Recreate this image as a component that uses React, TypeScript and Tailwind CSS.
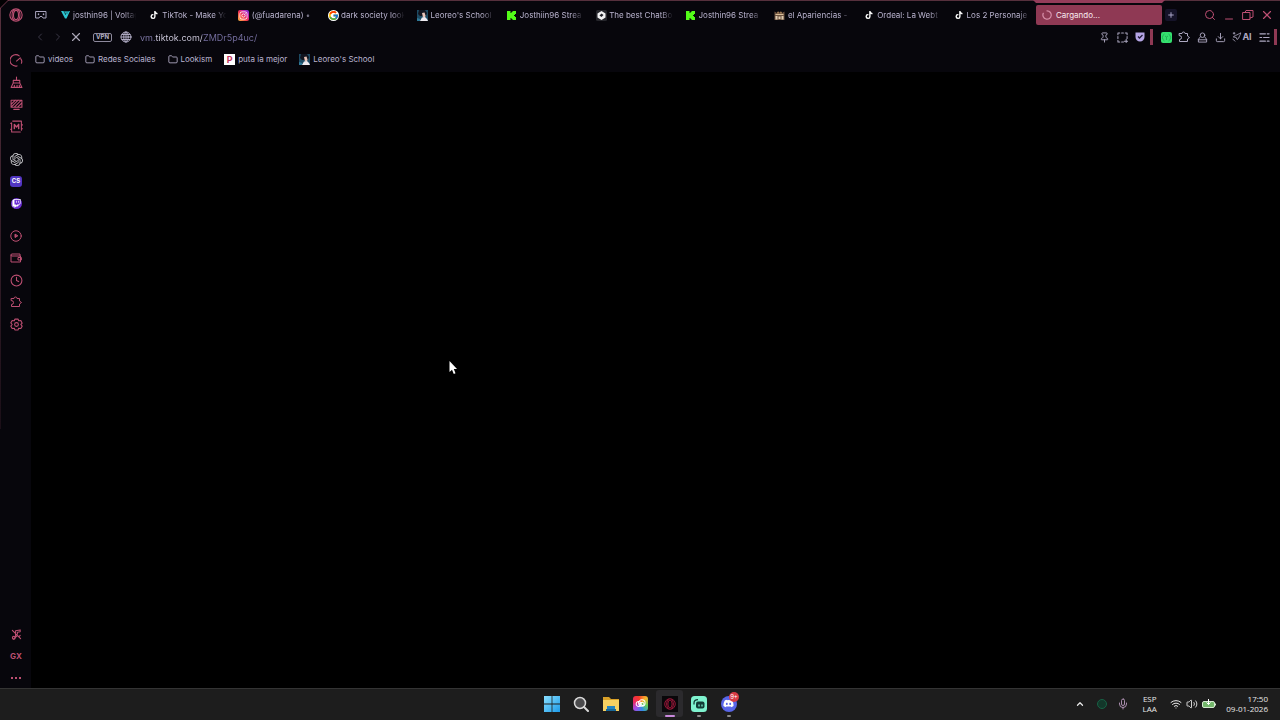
import type { ReactNode } from "react";
import {
  Search, Minus, X, Plus, ChevronLeft, ChevronRight, Folder, Download, Pin,
  Clock, ChevronUp, Mic, Wifi, Volume2,
} from "lucide-react";
import { FaTiktok, FaTwitch, FaDiscord, FaInstagram } from "react-icons/fa";
import { FcGoogle } from "react-icons/fc";
import { SiOpenai } from "react-icons/si";

function OperaIcon({ className }: { className: string }) {
  return (
    <svg viewBox="0 0 28 28" className={className} fill="none" stroke="currentColor" strokeWidth="2.2">
      <circle cx="14" cy="14" r="12.3" />
      <ellipse cx="14" cy="14" rx="5" ry="9.3" />
      <path d="M11 3.500C4.500 6 4.500 22 11 24.500M17 3.500c6.500 2.500 6.500 18.500 0 21" />
    </svg>
  );
}

function Line({ className = "size-3", width = 2, children }: { className?: string; width?: number; children: ReactNode }) {
  return (
    <svg viewBox="0 0 24 24" className={className} fill="none" stroke="currentColor" strokeWidth={width} strokeLinejoin="round" strokeLinecap="round">
      {children}
    </svg>
  );
}

function PuzzleIcon({ className }: { className: string }) {
  return (
    <Line className={className}>
      <path d="M3 5h5a3 3 0 0 1 6 0h5v5l4 3-4 3v5H3v-4a4 4 0 0 0 0-8z" />
    </Line>
  );
}

function Kick() {
  return (
    <svg viewBox="0 0 9 9" className="h-[9px] w-[9px]" fill="#53fc18">
      <path d="M0 0h3.500v2h1V1h1V0H9v3H8v1H7v1h1v1h1v3H5.500V8h-1V7h-1v2H0z" />
    </svg>
  );
}

function Volta() {
  return (
    <svg viewBox="0 0 18 16" className="h-2 w-[9px]" fill="#2cc4d0">
      <path d="M0 0h5l4 8 1.500-3H8L6.500 0H18l-7 15H8z" />
      <path d="M7 1h9M8.500 4H14" stroke="#07303a" strokeWidth="1" />
    </svg>
  );
}

function Portrait() {
  return (
    <svg viewBox="0 0 11 11" className="size-[11px]">
      <rect width="11" height="11" fill="#1d4a63" />
      <path d="M2 0h6l2 3-1 3H3L1 4z" fill="#11141f" />
      <path d="M5 3l2.500-.5 1 3L8 7.500H6z" fill="#e8c3b8" />
      <path d="M3 11l2-3.500 3-.5 2 2 1 2z" fill="#eeeaf0" />
      <path d="M0 8l3 1v2H0z" fill="#2f7897" />
    </svg>
  );
}

function Insta() {
  return (
    <span className="flex size-[11px] items-center justify-center rounded-[2px] bg-[linear-gradient(45deg,#fdc044,#f5334f_45%,#c324b8_75%,#6a3be0)] text-white">
      <FaInstagram className="size-[9px]" />
    </span>
  );
}

function ChatBot() {
  return (
    <svg viewBox="0 0 22 22" className="size-[11px]">
      <rect width="22" height="22" rx="3" fill="#26262c" />
      <path d="M11 2l8 5v8l-8 5-8-5V7z" fill="#f2f2f4" />
      <path d="M11 7l4 3-4 4-4-3z" fill="#222228" />
    </svg>
  );
}

function Chest() {
  return (
    <svg viewBox="0 0 22 22" className="size-[11px]">
      <path d="M1 3l5 3 2-4 3 3 3-3 2 4 5-3v17H1z" fill="#6d5340" />
      <path d="M3 8h16v2H3z" fill="#d8bd9a" />
      <path d="M3 12h4v7H3zM15 12h4v7h-4zM9 13h4v5H9z" fill="#e0cbb0" />
      <path d="M7 4h2v3H7zM13 4h2v3h-2z" fill="#c89a66" />
    </svg>
  );
}

const tik = <FaTiktok className="size-2 text-white" />;

const tabs: { title: string; icon: ReactNode }[] = [
  { title: "josthin96 | Voltag", icon: <Volta /> },
  { title: "TikTok - Make Yo", icon: tik },
  { title: "(@fuadarena) •", icon: <Insta /> },
  { title: "dark society look", icon: <FcGoogle className="size-[11px] rounded-full bg-white" /> },
  { title: "Leoreo's School", icon: <Portrait /> },
  { title: "Josthiin96 Strea", icon: <Kick /> },
  { title: "The best ChatBo", icon: <ChatBot /> },
  { title: "Josthin96 Strea", icon: <Kick /> },
  { title: "el Apariencias -", icon: <Chest /> },
  { title: "Ordeal: La Webt", icon: tik },
  { title: "Los 2 Personaje", icon: tik },
];

const folder = <Folder className="h-[11px] w-[10px]" strokeWidth={2} />;

const bookmarks: { title: string; icon: ReactNode }[] = [
  { title: "videos", icon: folder },
  { title: "Redes Sociales", icon: folder },
  { title: "Lookism", icon: folder },
  {
    title: "puta ia mejor",
    icon: (
      <span className="flex size-[11px] items-center justify-center bg-white text-[9px] leading-none font-bold text-[#c33460]">P</span>
    ),
  },
  { title: "Leoreo's School", icon: <Portrait /> },
];

const sideGroups: { label: string; icon: ReactNode }[][] = [
  [
    { label: "Speed Dial", icon: <Line className="size-[13px]"><path d="M13 22A10.500 10.500 0 1 1 17 3.500M12 13l7-6M20 9q3 4 1 8" /></Line> },
    { label: "GX Cleaner", icon: <Line className="size-[13px]"><path d="M12 2v6M6 8h12v5H6zM6 13l-4 8h20l-4-8M8 21v-4M13 21v-4M18 21l-1-4" /></Line> },
    { label: "Mods", icon: <Line className="size-[13px]"><path d="M2 4h20v13H2zM7 21h10M3 11l7-7M3 16L15 4M8 17L20 5M14 17l8-8" /></Line> },
    { label: "GX Control", icon: <Line className="size-[13px]"><path d="M5 2h16v17M19 22H3V5M1 6h2M1 17h2M21 9h2M21 16h2" /><path d="M8 16V8l4 5 4-5v8" strokeWidth="2.600" /></Line> },
  ],
  [
    { label: "ChatGPT", icon: <SiOpenai className="size-[13px] text-[#c8c8cc]" /> },
    { label: "CS", icon: <span className="flex h-[11px] w-3 items-center justify-center rounded-[3px] bg-[#5136c2] text-[6px] leading-none font-bold text-white">CS</span> },
    { label: "Twitch", icon: <span className="flex size-[11px] items-center justify-center rounded-full bg-[#6d31d6] text-white"><FaTwitch className="size-[9px]" /></span> },
  ],
  [
    { label: "Player", icon: <Line><circle cx="12" cy="12" r="10.500" /><path d="M10 9v6l5-3z" fill="currentColor" /></Line> },
    { label: "Wallet", icon: <Line><path d="M20 8V4H4a2 2 0 0 0 0 4h17v12H2V6M22 11h-6v5h6z" /></Line> },
    { label: "History", icon: <Clock className="size-[13px]" strokeWidth={2} /> },
    { label: "Extensions", icon: <PuzzleIcon className="size-3" /> },
    { label: "Settings", icon: <Line className="size-[13px]"><path d="M9 2h6l1 3 4-.5 2.500 5L20 12l2.500 3-2.500 4.500-4-.5-1 3H9l-1-3-4 .5L1.500 15 4 12 1.500 9 4 4.500 8 5z" /><circle cx="12" cy="12" r="3.500" /></Line> },
  ],
];

function SideButton({ label, children }: { label: string; children: ReactNode }) {
  return (
    <button aria-label={label} className="flex h-[22px] w-full items-center justify-center">{children}</button>
  );
}

function ToolButton({ label, children }: { label: string; children: ReactNode }) {
  return (
    <button aria-label={label} className="flex h-4 w-[18px] items-center justify-center">{children}</button>
  );
}

function WindowButton({ label, children }: { label: string; children: ReactNode }) {
  return (
    <button aria-label={label} className="flex h-5 w-[19px] items-center justify-center text-[#bd4f72]">{children}</button>
  );
}

function TabBar() {
  return (
    <div className="flex h-[26px] items-center border-t border-[#56303d] pt-[3px] pr-1 pl-[6px]">
      <button aria-label="Menu" className="flex w-[20px] justify-center text-[#bd4f72]"><OperaIcon className="size-[14px]" /></button>
      <button aria-label="Workspace" className="ml-2 flex w-[13px] justify-center text-[#a9a4bd]">
        <Line className="size-3"><path d="M2 5h20v13h-6l-2-3h-4l-2 3H2z" /><path d="M7 10v1M17 10v1" strokeWidth="3" /></Line>
      </button>
      <div role="tablist" className="ml-[6px] flex min-w-0 flex-1">
        {tabs.map((tab, i) => (
          <button key={i} role="tab" className="flex h-5 min-w-0 flex-1 items-center gap-[2px] pl-[6px] text-[#bab4cf]">
            <span className="flex w-3 shrink-0 justify-center">{tab.icon}</span>
            <span className="min-w-0 flex-1 text-left text-[8px] whitespace-nowrap [mask-image:linear-gradient(to_right,#000_74%,transparent_92%)]">{tab.title}</span>
          </button>
        ))}
      </div>
      <div className="relative w-[126px]">
        <svg viewBox="0 0 132 3" className="absolute -top-[5px] -left-[3px] h-[3px] w-[132px]"><path d="M0 0h132l-3 3H3z" fill="#943c5a" /></svg>
        <button role="tab" aria-selected="true" className="flex h-5 w-full items-center gap-1 rounded-[2px] bg-[#8f3954] pl-[6px] text-[8px] text-[#f8e8ee]">
          <Line className="size-[10px] text-[#d68ea8]" width={3}><path d="M12 2a10 10 0 1 1-9 6" /></Line>
          Cargando...
        </button>
      </div>
      <button aria-label="New tab" className="ml-[3px] flex size-3 items-center justify-center rounded-[2px] bg-[#151329] text-[#aaa5c9]"><Plus className="size-2" strokeWidth={3} /></button>
      <div className="ml-[23px] flex">
        <WindowButton label="Search tabs"><Search className="size-3" strokeWidth={2} /></WindowButton>
        <WindowButton label="Minimize"><Minus className="mt-2 size-3" strokeWidth={2} /></WindowButton>
        <WindowButton label="Restore"><Line className="size-3"><path d="M2 7h14v14H2zM6 7l2-4h14v13l-6 2" /></Line></WindowButton>
        <WindowButton label="Close"><X className="size-[14px]" strokeWidth={2} /></WindowButton>
      </div>
    </div>
  );
}

function AddressBar() {
  return (
    <div className="flex h-[22px] items-center pr-[3px] pl-[31px] text-[#aea9c2]">
      <ToolButton label="Back"><ChevronLeft className="size-3 text-[#3b3847]" strokeWidth={2} /></ToolButton>
      <ToolButton label="Forward"><ChevronRight className="size-3 text-[#3b3847]" strokeWidth={2} /></ToolButton>
      <ToolButton label="Stop"><X className="size-[14px] text-[#aaa6b6]" strokeWidth={2} /></ToolButton>
      <button className="ml-2 flex h-[9px] w-[19px] items-center justify-center rounded-[2px] border border-[#8d899c] text-[6px] leading-none font-bold text-[#b6b2c4]">VPN</button>
      <button aria-label="Site information" className="ml-2 flex">
        <Line className="size-3"><circle cx="12" cy="12" r="10" /><ellipse cx="12" cy="12" rx="4.500" ry="10" /><path d="M12 2v20M2 12h20M4 7h16M4 17h16" /></Line>
      </button>
      <input
        aria-label="Address"
        defaultValue="vm.tiktok.com/ZMDr5p4uc/"
        className="ml-2 h-4 min-w-0 flex-1 bg-[linear-gradient(90deg,#7f78a8_15px,#d3cfe2_15px_62px,#7770a2_62px)] bg-clip-text text-[9px] text-transparent outline-none"
      />
      <ToolButton label="Pin"><Pin className="size-[11px]" strokeWidth={2} /></ToolButton>
      <ToolButton label="Snapshot"><Line className="size-[11px]" width={2.2}><path d="M2 6V2h4M10 2h4M18 2h4v4M22 10v4M2 10v4M2 18v4h4M10 22h4M16 20h7M20 16v7" /></Line></ToolButton>
      <ToolButton label="Privacy protection">
        <svg viewBox="0 0 20 20" className="size-[10px]"><path d="M1 1h18v9c0 5-4 9-9 9s-9-4-9-9z" fill="#b5a5e5" /><path d="M6 9l3 3 6-6" fill="none" stroke="#211a38" strokeWidth="2.500" /></svg>
      </ToolButton>
      <span className="ml-px h-4 w-[3px] bg-[#8f3954]" />
      <span className="ml-1 flex">
        <ToolButton label="Volt extension">
          <svg viewBox="0 0 22 22" className="size-[11px]"><rect width="22" height="22" rx="4" fill="#35e06f" /><path d="M7 4a8 8 0 0 0 0 14M15 4a8 8 0 0 1 0 14M8 8l3 2 3-2M11 10v6" fill="none" stroke="#1fae50" strokeWidth="1.800" /></svg>
        </ToolButton>
      </span>
      <ToolButton label="Extensions"><PuzzleIcon className="size-3" /></ToolButton>
      <ToolButton label="Profile"><Line className="size-[11px]" width={2}><circle cx="12" cy="7" r="5" /><path d="M7 11l-4 5v6h18v-6l-4-5M3 17h18" /></Line></ToolButton>
      <ToolButton label="Downloads"><Download className="size-[11px]" strokeWidth={2} /></ToolButton>
      <button className="flex h-4 w-[26px] items-center justify-center text-[9px] font-bold">
        <Line className="size-[10px]" width={2}><path d="M9 8c5-1 7-4 12-6-1 6-4 8-5 13l-4 3-2-5-6-1zM2 17l5 5M5 5V1M3 3h4" /></Line>AI
      </button>
      <ToolButton label="Easy setup"><Line className="size-[11px]" width={2.4}><path d="M2 4h12M18 4h4M2 12h4M10 12h12M2 20h12M18 20h4" /></Line></ToolButton>
      <span className="ml-px h-4 w-[3px] bg-[#8f3954]" />
    </div>
  );
}

function Sidebar() {
  return (
    <aside className="flex w-[31px] shrink-0 flex-col pt-px pr-px pl-[2px] text-[#bd4f72]">
      <div className="flex flex-col gap-[11px]">
        {sideGroups.map((group, i) => (
          <div key={i}>
            {group.map((item) => <SideButton key={item.label} label={item.label}>{item.icon}</SideButton>)}
          </div>
        ))}
      </div>
      <div className="mt-auto">
        <SideButton label="Mute sounds"><Line className="size-[11px]" width={2.4}><path d="M10 18V4l10-2v4l-6 1M14 8v3M3 3l18 18M14 14l-8 8M20 14l-3 3" /><circle cx="6" cy="19" r="3" /></Line></SideButton>
        <button className="flex h-[22px] w-full items-center justify-center text-[8px] font-bold">GX</button>
        <button aria-label="More" className="flex h-[21px] w-full items-center justify-center gap-[2px]">
          <span className="size-[2px] bg-current" /><span className="size-[2px] bg-current" /><span className="size-[2px] bg-current" />
        </button>
      </div>
    </aside>
  );
}

function TaskButton({ label, active, running, children }: { label: string; active?: boolean; running?: boolean; children: ReactNode }) {
  return (
    <button aria-label={label} className={active ? "relative flex h-[27px] w-[27px] items-center justify-center rounded-[3px] bg-[#2b2a2d]" : "relative flex h-[27px] w-[27px] items-center justify-center"}>
      {children}
      {active && <span className="absolute bottom-0 h-[2px] w-[10px] rounded-full bg-[#c888dc]" />}
      {running && <span className="absolute bottom-0 h-[2px] w-1 rounded-full bg-[#8c8c8c]" />}
    </button>
  );
}

function Taskbar() {
  return (
    <footer className="grid h-8 shrink-0 grid-cols-[1fr_auto_1fr] items-center border-t border-[#343434] bg-[#1d1d1d] pb-[2px] text-[#e8e8e8]">
      <div />
      <div className="flex w-[204px] justify-between">
        <TaskButton label="Start">
          <svg viewBox="0 0 16 16" className="size-4"><defs><linearGradient id="win" x2="1" y2="1"><stop stopColor="#8ae0ff" /><stop offset="1" stopColor="#1c9bea" /></linearGradient></defs><path d="M0 0h7.600v7.600H0zM8.400 0H16v7.600H8.400zM0 8.400h7.600V16H0zM8.400 8.400H16V16H8.400z" fill="url(#win)" /></svg>
        </TaskButton>
        <TaskButton label="Search">
          <svg viewBox="0 0 16 16" className="size-4"><circle cx="7" cy="7" r="5.500" fill="#4b4b4d" stroke="#d9d9d9" strokeWidth="1.500" /><path d="M11 11l4 4" stroke="#d9d9d9" strokeWidth="2" strokeLinecap="round" /></svg>
        </TaskButton>
        <TaskButton label="File Explorer">
          <svg viewBox="0 0 18 16" className="h-4 w-[18px]"><path d="M1 1h6l2 2h8v4H1z" fill="#d9a128" /><path d="M1 4h16v11H1z" fill="#f7d162" /><path d="M5 10h8v5H5z" fill="#2383c1" /><path d="M4 13h10v2H4z" fill="#176798" /></svg>
        </TaskButton>
        <TaskButton label="Creative Cloud">
          <span className="flex size-[15px] items-center justify-center rounded-[3px] bg-[conic-gradient(from_45deg,#f5b72c,#62ce55,#318be8,#a34be6,#ed2963,#f63a28,#f5b72c)]">
            <Line className="size-[11px] text-white" width={2.2}><circle cx="8" cy="13" r="5.500" /><circle cx="15" cy="11" r="7" /><path d="M8 10l7 6c5 2 6-4 3-6s-6 1-8 4" /></Line>
          </span>
        </TaskButton>
        <TaskButton label="Opera GX" active>
          <span className="flex size-4 items-center justify-center bg-[#09070a] text-[#a3173c]"><OperaIcon className="size-3" /></span>
        </TaskButton>
        <TaskButton label="Streamlabs" running>
          <svg viewBox="0 0 32 32" className="size-4"><rect width="32" height="32" rx="7" fill="#7ff3cf" /><rect x="10" y="11" width="17" height="14" rx="4" fill="#123c36" /><path d="M6 17v-3c0-4 3-7 8-7" fill="none" stroke="#123c36" strokeWidth="2.500" /><path d="M16 17v4M22 17v4" stroke="#7ff3cf" strokeWidth="2.500" /></svg>
        </TaskButton>
        <TaskButton label="Discord" running>
          <span className="flex size-4 items-center justify-center rounded-full bg-[#5865e8] text-white"><FaDiscord className="size-[11px]" /></span>
          <span className="absolute top-[2px] right-[3px] flex size-[10px] items-center justify-center rounded-full bg-[#d63b45] text-[6px] leading-none text-white">9+</span>
        </TaskButton>
      </div>
      <div className="flex items-center justify-end pr-3 font-['Open_Sans',sans-serif] text-[8px] leading-[10px]">
        <button aria-label="Show hidden icons"><ChevronUp className="size-[10px]" strokeWidth={3} /></button>
        <span className="ml-3 size-[10px] rounded-full border border-[#176245] bg-[#13372a]" />
        <button aria-label="Microphone" className="ml-[10px] text-[#b99abd]"><Mic className="size-3" strokeWidth={1.8} /></button>
        <button className="ml-3 w-[17px] text-center">ESP<br />LAA</button>
        <button aria-label="Network, sound and battery" className="ml-3 flex items-center gap-1">
          <Wifi className="size-3" strokeWidth={2} />
          <Volume2 className="size-3" strokeWidth={1.8} />
          <svg viewBox="0 0 28 20" className="h-[10px] w-[14px]"><rect x="1" y="5" width="24" height="12" rx="3" fill="#73b76b" stroke="#d5ead1" strokeWidth="2" /><path d="M27 9v4" stroke="#d5ead1" strokeWidth="2" /><path d="M13 0v11M9 7l4 4 4-4" stroke="#fff" strokeWidth="2" fill="none" /></svg>
        </button>
        <button className="ml-[10px] text-right whitespace-nowrap">17:50<br />09-01-2026</button>
      </div>
    </footer>
  );
}

export default function App() {
  return (
    <div className="relative flex h-screen flex-col overflow-hidden bg-[#07060c] font-['Inter','Liberation_Sans',sans-serif]">
      <TabBar />
      <AddressBar />
      <div className="flex min-h-0 flex-1">
        <Sidebar />
        <div className="flex min-w-0 flex-1 flex-col">
          <nav aria-label="Bookmarks" className="flex h-6 shrink-0 items-center gap-3 pb-[2px] pl-1 text-[8px] text-[#bab4cf]">
            {bookmarks.map((b) => (
              <a key={b.title} href="#" className="flex items-center gap-[3px] whitespace-nowrap">{b.icon}{b.title}</a>
            ))}
          </nav>
          <main className="flex-1 bg-black" />
        </div>
      </div>
      <Taskbar />
      <svg viewBox="0 0 9 9" className="pointer-events-none absolute top-0 left-0 size-[9px]"><path d="M0 0h8L0 8z" fill="#020103" /><path d="M.5 9V8L8 .5h1" fill="none" stroke="#6d3547" /></svg>
      <span className="pointer-events-none absolute top-[9px] left-0 h-[420px] w-px bg-linear-to-b from-[#56303d] to-[#1b0f18]" />
      <svg viewBox="0 0 8 13" className="pointer-events-none absolute top-[361px] left-[449px] h-[13px] w-2"><path d="M.5 0v11l2.500-2.300L4.800 13l1.700-.8L4.800 8H8z" fill="#fff" /></svg>
    </div>
  );
}
